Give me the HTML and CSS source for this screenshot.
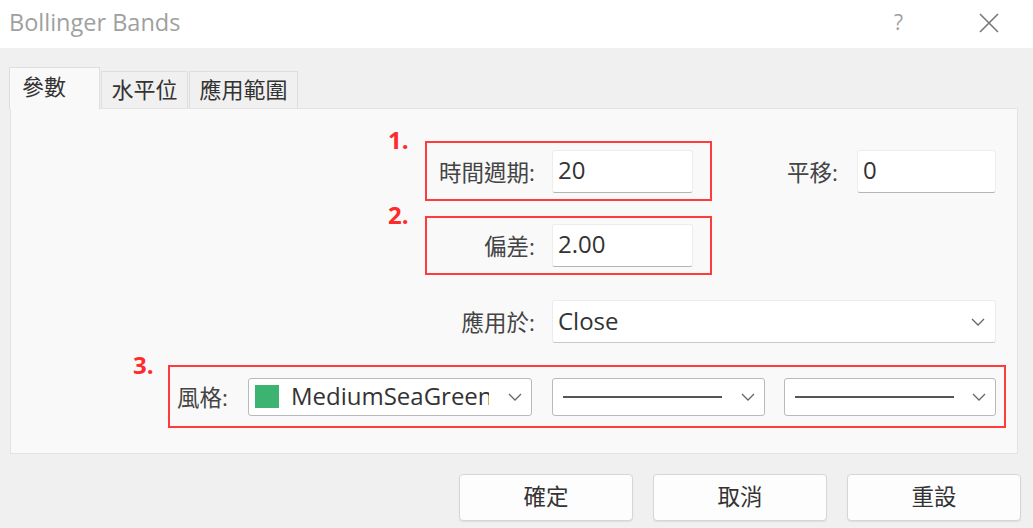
FILE: index.html
```html
<!DOCTYPE html>
<html lang="zh-Hant">
<head>
<meta charset="utf-8">
<title>Bollinger Bands</title>
<link rel="stylesheet" href="styles.css">
</head>
<body>
<div class="dialog">
  <header class="titlebar">
    <span class="title">Bollinger Bands</span>
    <div class="title-actions">
      <span class="help">?</span>
      <svg class="close" width="20" height="20" viewBox="0 0 20 20"><path d="M1 1 L19 19 M19 1 L1 19" stroke="#777" stroke-width="1.6" fill="none"/></svg>
    </div>
  </header>
  <div class="content">
    <div class="tabs">
      <div class="tab active">參數</div>
      <div class="tab">水平位</div>
      <div class="tab">應用範圍</div>
    </div>
    <div class="panel">
      <div class="row row-period">
        <div class="mark mark-a">
          <span class="num">1.</span>
          <span class="label">時間週期:</span>
          <div class="field">20</div>
        </div>
        <span class="label label-shift">平移:</span>
        <div class="field field-shift">0</div>
      </div>
      <div class="row row-dev">
        <div class="mark mark-b">
          <span class="num">2.</span>
          <span class="label">偏差:</span>
          <div class="field">2.00</div>
        </div>
      </div>
      <div class="row row-apply">
        <span class="label">應用於:</span>
        <div class="select select-apply">
          <span class="select-text">Close</span>
          <svg class="chev" width="14" height="8" viewBox="0 0 14 8"><path d="M1 1 L7 7 L13 1" stroke="#666" stroke-width="1.3" fill="none"/></svg>
        </div>
      </div>
      <div class="row row-style">
        <div class="mark mark-c">
          <span class="num num-c">3.</span>
          <span class="label label-style">風格:</span>
          <div class="combo combo-color">
            <span class="swatch"></span>
            <span class="combo-text">MediumSeaGreen</span>
            <svg class="chev" width="14" height="8" viewBox="0 0 14 8"><path d="M1 1 L7 7 L13 1" stroke="#666" stroke-width="1.3" fill="none"/></svg>
          </div>
          <div class="combo combo-line">
            <span class="line"></span>
            <svg class="chev" width="14" height="8" viewBox="0 0 14 8"><path d="M1 1 L7 7 L13 1" stroke="#666" stroke-width="1.3" fill="none"/></svg>
          </div>
          <div class="combo combo-line combo-line2">
            <span class="line"></span>
            <svg class="chev" width="14" height="8" viewBox="0 0 14 8"><path d="M1 1 L7 7 L13 1" stroke="#666" stroke-width="1.3" fill="none"/></svg>
          </div>
        </div>
      </div>
    </div>
    <div class="buttons">
      <div class="btn">確定</div>
      <div class="btn">取消</div>
      <div class="btn">重設</div>
    </div>
  </div>
</div>
</body>
</html>
```
FILE: styles.css
```css
* { box-sizing: border-box; }
html, body { margin: 0; padding: 0; }
body {
  width: 1033px;
  height: 528px;
  overflow: hidden;
  background: #f0f0f0;
  font-family: "Open Sans", "Noto Sans CJK TC", sans-serif;
  font-size: 23px;
  color: #333;
}
.dialog { width: 1033px; height: 528px; display: flex; flex-direction: column; }

.titlebar {
  height: 48px;
  background: #fff;
  display: flex;
  align-items: center;
  justify-content: space-between;
  padding: 0 34px 0 9px;
}
.title { color: #a0a0a0; font-size: 23.5px; padding-bottom: 5px; }
.title-actions { display: flex; align-items: center; gap: 76px; }
.help { color: #a0a0a0; font-size: 21px; padding-bottom: 4px; }
.close { display: block; margin-bottom: 2px; }

.content { flex: 1; padding: 19px 12px 0 9px; display: flex; flex-direction: column; }

.tabs { display: flex; align-items: flex-end; height: 41px; gap: 1px; }
.tab {
  height: 37px;
  padding: 0 8px;
  border: 1px solid #dedede;
  border-bottom: none;
  background: #f0f0f0;
  color: #333;
  font-size: 22px;
  line-height: 34px;
  text-align: center;
}
.tab:nth-child(2) { width: 87px; }
.tab:nth-child(3) { width: 109px; }
.tab.active {
  width: 91px;
  height: 42px;
  background: #f9f9f9;
  text-align: left;
  padding-left: 12px;
  line-height: 36px;
  margin-bottom: -1px;
  position: relative;
  z-index: 1;
}

.panel {
  width: 1008px;
  height: 346px;
  margin-left: 1px;
  background: #f9f9f9;
  border: 1px solid #e3e3e3;
  display: flex;
  flex-direction: column;
}

.row { display: flex; align-items: center; }
.row-period { margin-top: 32px; padding-left: 414px; }
.row-dev { margin-top: 15px; padding-left: 414px; }
.row-apply { margin-top: 25px; padding-left: 416px; }
.row-style { margin-top: 22px; padding-left: 157px; }

.mark {
  position: relative;
  border: 2px solid #ff3b3b;
  display: flex;
  align-items: center;
}
.mark-a { width: 287px; height: 60px; }
.mark-b { width: 287px; height: 59px; }
.mark-c { width: 838px; height: 63px; padding-left: 7px; }

.num {
  position: absolute;
  left: -39px;
  top: -16px;
  color: #ff2a2a;
  font-weight: 700;
  font-size: 24px;
  line-height: 26px;
}
.num-c { left: -37px; top: -15px; }

.label { color: #444; font-size: 22.5px; }
.mark-a .label, .mark-b .label, .row-apply .label {
  width: 108px;
  text-align: right;
  margin-right: 17px;
}
.label-shift { width: 126px; text-align: right; margin-right: 19px; }
.label-style { margin-right: 20px; }

.field {
  width: 141px;
  height: 43px;
  background: #fff;
  border: 1px solid #ededed;
  border-bottom: 1px solid #b5b5b5;
  border-radius: 3px;
  padding: 0 5px;
  font-size: 24px;
  line-height: 38px;
  color: #333;
}
.field-shift { width: 139px; }

.select {
  height: 43px;
  background: #fff;
  border: 1px solid #ececec;
  border-bottom: 1px solid #c9c9c9;
  border-radius: 3px;
  display: flex;
  align-items: center;
  justify-content: space-between;
  padding: 0 10px 0 5px;
}
.select-apply { width: 444px; }
.select-text { font-size: 24px; color: #333; padding-bottom: 2px; }

.combo {
  height: 38px;
  background: #fff;
  border: 1px solid #b9b9b9;
  border-radius: 3px;
  display: flex;
  align-items: center;
  padding: 0 9px 0 6px;
}
.combo-color { width: 284px; margin-right: 20px; }
.combo-line { width: 213px; margin-right: 19px; justify-content: space-between; padding-left: 10px; }
.combo-line2 { width: 212px; margin-right: 0; }
.swatch {
  width: 24px;
  height: 23px;
  background: #3cb371;
  flex: none;
  margin-right: 12px;
}
.combo-text {
  font-size: 24px;
  color: #333;
  width: 198px;
  overflow: hidden;
  white-space: nowrap;
  padding-bottom: 2px;
}
.combo-color .chev { margin-left: auto; }
.line { width: 159px; height: 2px; background: #555; }
.chev { display: block; flex: none; }

.buttons {
  margin-top: 20px;
  display: flex;
  justify-content: flex-end;
  gap: 20px;
}
.btn {
  width: 174px;
  height: 47px;
  background: #fdfdfd;
  border: 1px solid #d6d6d6;
  border-radius: 4px;
  box-shadow: 0 1px 1px rgba(0,0,0,0.08);
  text-align: center;
  line-height: 44px;
  font-size: 22.5px;
  color: #333;
}
```
